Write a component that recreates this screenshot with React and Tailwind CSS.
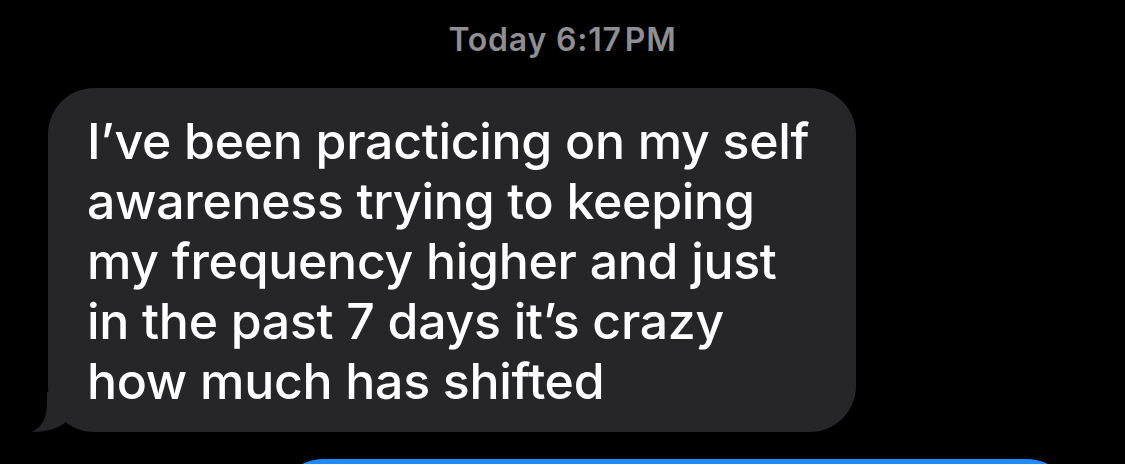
import React from "react";

// little hook at the bottom-left of the incoming bubble
const Tail = () => (
  <svg
    className="absolute left-[-17px] bottom-0"
    width="40"
    height="40"
    viewBox="0 0 40 40"
  >
    <path
      d="M16 0 L16 10 C 16 28, 10 36, 0 40 C 18 40, 28 36, 36 29 L36 0 Z"
      fill="#262629"
    />
  </svg>
);

const App = () => {
  const lines = [
    "I’ve been practicing on my self",
    "awareness trying to keeping",
    "my frequency higher and just",
    "in the past 7 days it’s crazy",
    "how much has shifted",
  ];

  return (
    <div className="w-[1125px] h-[464px] bg-black overflow-hidden font-['Inter',sans-serif]">
      {/* timestamp */}
      <div className="pt-[23px] text-center text-[32px] leading-[34px] font-semibold tracking-[0.8px] text-[#8e8e93]">
        Today 6:17<span className="ml-[3px]">PM</span>
      </div>

      {/* incoming bubble */}
      <div className="mt-[31px] ml-[48px] relative w-[808px]">
        <Tail />
        <div className="relative bg-[#262629] rounded-[46px] pl-[39px] pr-[20px] pt-[23px] pb-[21px]">
          <div className="text-white text-[50px] leading-[60px] font-medium tracking-[-0.3px]">
            {lines.map((l) => (
              <div key={l}>{l}</div>
            ))}
          </div>
        </div>
      </div>

      {/* outgoing bubble, cut off */}
      <div className="mt-[27px] ml-[277px] w-[796px] h-[60px] bg-[#1f8bfa] rounded-t-[46px]" />
    </div>
  );
};

export default App;
